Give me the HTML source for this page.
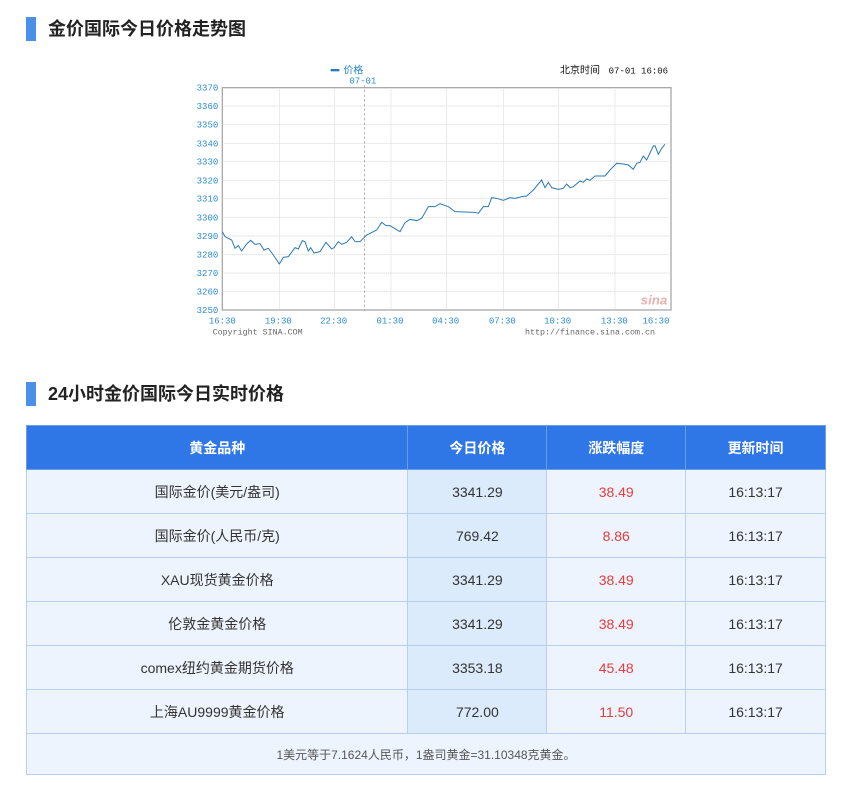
<!DOCTYPE html>
<html><head><meta charset="utf-8"><style>
body{margin:0;background:#fff;width:848px;height:791px;position:relative;font-family:"Liberation Sans","Noto Sans CJK SC",sans-serif;overflow:hidden}
.t{position:absolute;left:26px;height:24px;font-size:18px;font-weight:bold;color:#222;line-height:24px}
.t i{position:absolute;left:0;top:0;width:10px;height:24px;background:#4a90e8}
.t span{position:absolute;left:22px;white-space:nowrap}
table{position:absolute;left:26px;top:425px;border-collapse:collapse;width:800px;font-size:14px;color:#333}
td,th{border:1px solid #b6d0ee;text-align:center;height:43px;padding:0}
th{background:#2f76e6;color:#fff;font-weight:bold;border-color:#6a9ee8;height:43px}
td{background:#edf4fd}
td.c{background:#dcebfb}
td.r{color:#e63c3c}
.f td{height:40px;font-size:12px;color:#555}
</style></head><body>
<div class="t" style="top:17px"><i></i><span>金价国际今日价格走势图</span></div>
<svg style="position:absolute;left:190px;top:55px" width="490" height="290" viewBox="0 0 1470 870">
<rect x="97" y="98" width="1346" height="667" fill="#fff" stroke="#aaa" stroke-width="4"/>
<g stroke="#c4c4c4" stroke-width="2" stroke-dasharray="3 3">
<line x1="97" x2="1443" y1="153" y2="153"/><line x1="97" x2="1443" y1="209" y2="209"/><line x1="97" x2="1443" y1="265" y2="265"/><line x1="97" x2="1443" y1="320" y2="320"/><line x1="97" x2="1443" y1="376" y2="376"/><line x1="97" x2="1443" y1="431" y2="431"/><line x1="97" x2="1443" y1="487" y2="487"/><line x1="97" x2="1443" y1="543" y2="543"/><line x1="97" x2="1443" y1="598" y2="598"/><line x1="97" x2="1443" y1="654" y2="654"/><line x1="97" x2="1443" y1="709" y2="709"/>
<line y1="98" y2="765" x1="268" x2="268"/><line y1="98" y2="765" x1="434" x2="434"/><line y1="98" y2="765" x1="603" x2="603"/><line y1="98" y2="765" x1="770" x2="770"/><line y1="98" y2="765" x1="940" x2="940"/><line y1="98" y2="765" x1="1105" x2="1105"/><line y1="98" y2="765" x1="1275" x2="1275"/>
</g>
<line x1="523" x2="523" y1="90" y2="765" stroke="#999" stroke-width="2" stroke-dasharray="8 6"/>
<polyline fill="none" stroke="#2a7ab8" stroke-width="3" points="97,530 105,545 125,555 135,580 145,572 155,588 170,567 182,556 195,568 210,566 222,585 235,580 250,600 268,627 280,607 295,605 315,578 325,582 337,557 345,560 355,588 362,578 372,594 390,590 408,562 425,582 432,578 445,560 455,568 470,562 485,545 495,560 510,560 530,540 550,530 560,525 575,502 588,512 600,512 630,530 645,503 660,493 680,497 695,490 715,455 735,455 750,446 775,455 795,470 855,472 865,475 880,455 895,455 905,428 920,430 940,436 960,428 975,430 995,425 1010,423 1030,405 1055,375 1065,398 1075,382 1085,398 1105,403 1120,400 1130,387 1140,398 1150,395 1170,378 1180,382 1190,372 1200,376 1215,363 1245,363 1260,345 1280,325 1300,327 1315,330 1330,343 1340,325 1350,322 1360,303 1370,315 1390,273 1395,272 1405,298 1415,280 1425,268"/>
<g font-family="Liberation Mono,monospace" font-size="27" fill="#2a8ad0">
<text x="20" y="107">3370</text><text x="20" y="162">3360</text><text x="20" y="218">3350</text><text x="20" y="274">3340</text><text x="20" y="329">3330</text><text x="20" y="385">3320</text><text x="20" y="440">3310</text><text x="20" y="496">3300</text><text x="20" y="552">3290</text><text x="20" y="607">3280</text><text x="20" y="663">3270</text><text x="20" y="718">3260</text><text x="20" y="774">3250</text>
<g text-anchor="middle"><text x="97" y="806">16:30</text><text x="265" y="806">19:30</text><text x="431" y="806">22:30</text><text x="600" y="806">01:30</text><text x="767" y="806">04:30</text><text x="937" y="806">07:30</text><text x="1103" y="806">10:30</text><text x="1273" y="806">13:30</text><text x="1398" y="806">16:30</text></g>
<text x="478" y="86">07-01</text>
</g>
<rect x="422" y="42" width="26" height="7" fill="#2a7ab8"/>
<text x="460" y="55" font-size="30" fill="#2a8ad0">价格</text>
<text x="1110" y="55" font-size="30" fill="#111">北京时间</text>
<text x="1256" y="55" font-size="27" font-family="Liberation Mono,monospace" fill="#111">07-01 16:06</text>
<g font-family="Liberation Mono,monospace" font-size="25" fill="#666"><text x="68" y="838">Copyright  SINA.COM</text><text x="1005" y="838">http://finance.sina.com.cn</text></g>
<text x="1352" y="748" font-size="40" font-style="italic" font-weight="bold" fill="#e8b0b0">sina</text>
</svg>
<div class="t" style="top:382px"><i></i><span>24小时金价国际今日实时价格</span></div>
<table>
<colgroup><col style="width:382px"><col style="width:139px"><col style="width:139px"><col style="width:140px"></colgroup>
<tr><th>黄金品种</th><th>今日价格</th><th>涨跌幅度</th><th>更新时间</th></tr>
<tr><td>国际金价(美元/盎司)</td><td class="c">3341.29</td><td class="r">38.49</td><td>16:13:17</td></tr>
<tr><td>国际金价(人民币/克)</td><td class="c">769.42</td><td class="r">8.86</td><td>16:13:17</td></tr>
<tr><td>XAU现货黄金价格</td><td class="c">3341.29</td><td class="r">38.49</td><td>16:13:17</td></tr>
<tr><td>伦敦金黄金价格</td><td class="c">3341.29</td><td class="r">38.49</td><td>16:13:17</td></tr>
<tr><td>comex纽约黄金期货价格</td><td class="c">3353.18</td><td class="r">45.48</td><td>16:13:17</td></tr>
<tr><td>上海AU9999黄金价格</td><td class="c">772.00</td><td class="r">11.50</td><td>16:13:17</td></tr>
<tr class="f"><td colspan="4">1美元等于7.1624人民币，1盎司黄金=31.10348克黄金。</td></tr>
</table>
</body></html>
